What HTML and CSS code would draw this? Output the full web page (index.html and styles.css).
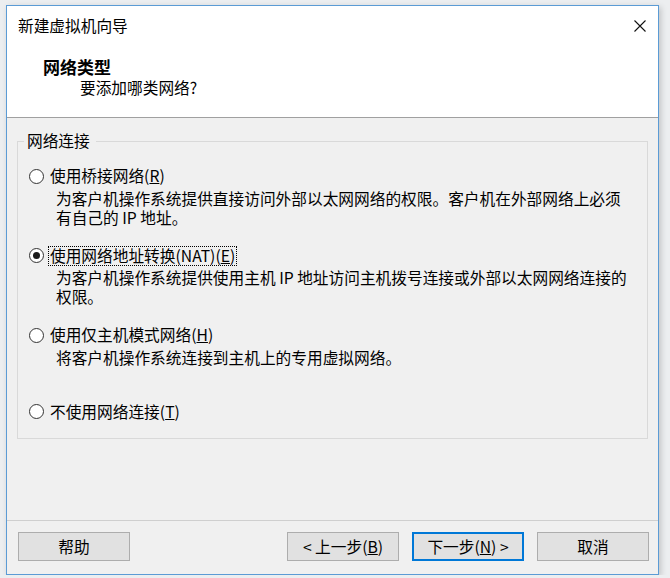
FILE: index.html
```html
<!DOCTYPE html>
<html lang="zh-CN">
<head>
<meta charset="UTF-8">
<title>新建虚拟机向导</title>
<link rel="stylesheet" href="styles.css">
</head>
<body>

<div class="window">
  <div class="titlebar">
    <span class="title">新建虚拟机向导</span>
    <svg class="close" width="12" height="12" viewBox="0 0 12 12">
      <path d="M0.5 0.5 L11.5 11.5 M11.5 0.5 L0.5 11.5" stroke="#111" stroke-width="1.1" fill="none"/>
    </svg>
  </div>

  <div class="header">
    <div class="heading">网络类型</div>
    <div class="subheading">要添加哪类网络?</div>
  </div>

  <div class="content">
    <fieldset class="group">
      <legend>网络连接</legend>

      <div class="option">
        <div class="row"><span class="radio"></span><span class="label">使用桥接网络(<u>R</u>)</span></div>
        <div class="desc">为客户机操作系统提供直接访问外部以太网网络的权限。客户机在外部网络上必须<br>有自己的 IP 地址。</div>
      </div>

      <div class="option">
        <div class="row"><span class="radio checked"></span><span class="label focused">使用网络地址转换(NAT)(<u>E</u>)</span></div>
        <div class="desc">为客户机操作系统提供使用主机 IP 地址访问主机拨号连接或外部以太网网络连接的<br>权限。</div>
      </div>

      <div class="option">
        <div class="row"><span class="radio"></span><span class="label">使用仅主机模式网络(<u>H</u>)</span></div>
        <div class="desc">将客户机操作系统连接到主机上的专用虚拟网络。</div>
      </div>

      <div class="option last">
        <div class="row"><span class="radio"></span><span class="label">不使用网络连接(<u>T</u>)</span></div>
      </div>
    </fieldset>
  </div>

  <div class="footer">
    <button class="btn">帮助</button>
    <div class="nav">
      <button class="btn">&lt; 上一步(<u>B</u>)</button>
      <button class="btn default">下一步(<u>N</u>) &gt;</button>
      <button class="btn">取消</button>
    </div>
  </div>
</div>

</body>
</html>
```

FILE: styles.css
```css
body {
  margin: 0;
  padding: 0;
  background-color: #eceef0;
  font-family: "Noto Sans CJK SC", "Noto Sans", sans-serif;
  font-size: 15.7px;
  color: #000;
}

.window {
  width: 651px;
  height: 568px;
  margin: 5px 0 0 6px;
  border: 1px solid #5b9bd5;
  background-color: #f0f0f0;
  box-shadow: 2px 2px 6px rgba(0, 0, 0, 0.18);
}

.titlebar {
  display: flex;
  align-items: center;
  justify-content: space-between;
  height: 39px;
  padding: 0 12px 0 11px;
  background-color: #fff;
}

.title {
  line-height: 39px;
}

.header {
  height: 73px;
  box-sizing: border-box;
  padding: 12px 0 0 36px;
  background-color: #fff;
  border-bottom: 1px solid #a0a0a0;
}

.heading {
  font-size: 17px;
  font-weight: bold;
  line-height: 20px;
}

.subheading {
  margin: 1px 0 0 37px;
  line-height: 20px;
}

.content {
  height: 402px;
  box-sizing: border-box;
  padding: 13px 10px 0 10px;
}

.group {
  margin: 0;
  padding: 15px 10px 16px 11px;
  border: 1px solid #d9d9d9;
}

.group legend {
  margin-left: -5px;
  padding: 0 6px 0 3px;
  line-height: 20px;
}

.option {
  margin-bottom: 19px;
}

.option.last {
  margin-top: 35px;
  margin-bottom: 0;
}

.row {
  display: flex;
  align-items: center;
  height: 20px;
}

.radio {
  width: 13px;
  height: 13px;
  border: 1px solid #333;
  border-radius: 50%;
  background-color: #fff;
  margin-right: 6px;
  position: relative;
}

.radio.checked::after {
  content: "";
  position: absolute;
  left: 3px;
  top: 3px;
  width: 7px;
  height: 7px;
  border-radius: 50%;
  background-color: #1a1a1a;
}

.label {
  line-height: 20px;
}

.label.focused {
  margin-left: -2px;
  padding: 0 1px;
  line-height: 18px;
  border: 1px dotted #000;
}

.desc {
  margin: 2.5px 0 0 27px;
  line-height: 19px;
  white-space: nowrap;
}

.footer {
  display: flex;
  justify-content: space-between;
  padding: 11px 9px 0 11px;
  border-top: 1px solid #cfcfcf;
}

.nav {
  display: flex;
  gap: 13px;
}

.btn {
  width: 112px;
  height: 29px;
  padding: 0;
  border: 1px solid #adadad;
  border-radius: 0;
  background-color: #e1e1e1;
  font-family: inherit;
  font-size: 15.7px;
  color: #000;
}

.btn.default {
  border: 2px solid #0078d7;
}
```
